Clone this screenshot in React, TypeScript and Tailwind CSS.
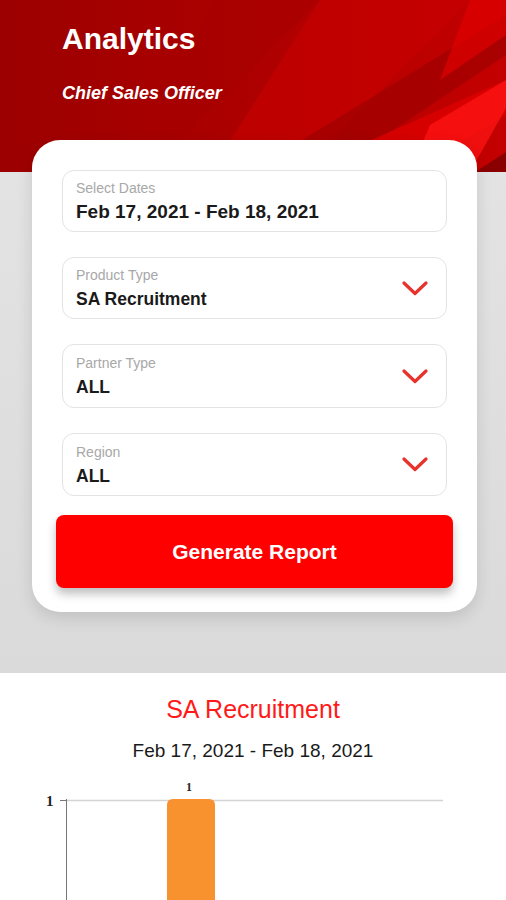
const font = { fontFamily: '"Liberation Sans", Arial, sans-serif' }

function HeaderArt() {
    return (
        <svg className="absolute inset-0 h-full w-full" viewBox="0 0 506 172" preserveAspectRatio="none">
            <defs>
                <linearGradient id="hdr" x1="0" y1="0" x2="1" y2="0">
                    <stop offset="0" stopColor="#9c0000" />
                    <stop offset="0.5" stopColor="#ad0000" />
                    <stop offset="1" stopColor="#c40000" />
                </linearGradient>
            </defs>
            <rect width="506" height="172" fill="url(#hdr)" />
            <polygon points="215,0 320,0 150,172 115,172" fill="#a50000" opacity="0.5" />
            <polygon points="320,0 470,0 300,172 210,172" fill="#c80000" opacity="0.6" />
            <polygon points="250,172 506,15 506,55 330,172" fill="#9e0000" opacity="0.7" />
            <polygon points="300,172 506,80 506,115 410,172" fill="#dd0000" opacity="0.8" />
            <polygon points="470,0 506,0 506,35 440,80" fill="#e00000" opacity="0.7" />
            <polygon points="430,125 506,80 506,108 470,172 410,172" fill="#ff1414" opacity="0.75" />
            <polygon points="475,172 506,152 506,172" fill="#8a0000" />
        </svg>
    )
}

function Chevron() {
    return (
        <svg width="26" height="15" viewBox="0 0 26 15" className="shrink-0">
            <polyline points="2,2 13,12.5 24,2" fill="none" stroke="#e8322b" strokeWidth="3.2" strokeLinecap="round" strokeLinejoin="round" />
        </svg>
    )
}

function Field({ label, value, select, big, h }: { label: string; value: string; select?: boolean; big?: boolean; h: string }) {
    return (
        <div className={`flex ${h} items-center justify-between rounded-[12px] border border-[#e3e3e3] bg-white pl-[13px] pr-[18px]`}>
            <div className="flex flex-col pt-[1px]">
                <span className="text-[14px] leading-[18px] text-[#a8a8a8]">{label}</span>
                <span
                    className={`mt-[3px] leading-[24px] font-bold text-[#1a1a1a] ${big ? "text-[19px]" : "text-[17.5px]"}`}
                >
                    {value}
                </span>
            </div>
            {select && <Chevron />}
        </div>
    )
}

export default function App() {
    return (
        <div className="h-[900px] w-[506px] overflow-hidden bg-white" style={font}>
            <div className="relative h-[172px] overflow-hidden">
                <HeaderArt />
                <div className="relative px-[62px] pt-[20px]">
                    <h1 className="text-[30px] font-bold leading-[38px] text-white">Analytics</h1>
                    <p className="mt-[23px] text-[18px] font-bold italic leading-[24px] text-white">Chief Sales Officer</p>
                </div>
            </div>

            <div className="flex h-[501px] flex-col bg-gradient-to-b from-[#e3e3e3] to-[#dadada] pl-[32px] pr-[29px]">
                <div className="relative -mt-[32px] rounded-[28px] bg-white px-[30px] pb-[24px] pt-[30px] shadow-[0_6px_16px_rgba(0,0,0,0.12)]">
                    <div className="flex flex-col gap-[25px]">
                        <Field label="Select Dates" value="Feb 17, 2021 - Feb 18, 2021" big h="h-[62px]" />
                        <Field label="Product Type" value="SA Recruitment" select h="h-[62px]" />
                        <Field label="Partner Type" value="ALL" select h="h-[64px]" />
                        <Field label="Region" value="ALL" select h="h-[63px]" />
                    </div>
                    <button className="-mx-[6px] mt-[19px] flex h-[73px] w-[calc(100%+12px)] items-center justify-center rounded-[8px] bg-[#ff0000] text-[21px] font-bold text-white shadow-[0_6px_10px_rgba(0,0,0,0.25)]">
                        Generate Report
                    </button>
                </div>
            </div>

            <div className="flex flex-col items-center pt-[20px]">
                <h2 className="text-[25px] leading-[32px] text-[#ff1a1a]">SA Recruitment</h2>
                <p className="mt-[14px] text-[19px] leading-[24px] text-[#1a1a1a]">Feb 17, 2021 - Feb 18, 2021</p>
            </div>

            <div className="relative mt-[6px] h-[200px]">
                <svg className="absolute left-0 top-0" width="506" height="200" viewBox="0 0 506 200">
                    <text x="186" y="22" fontSize="12" fontFamily="Liberation Serif, serif" fontWeight="bold" fill="#222">1</text>
                    <text x="46" y="37" fontSize="15" fontFamily="Liberation Serif, serif" fontWeight="bold" fill="#222">1</text>
                    <line x1="66.5" y1="30" x2="66.5" y2="200" stroke="#777" strokeWidth="1" />
                    <line x1="60" y1="31.5" x2="66" y2="31.5" stroke="#777" strokeWidth="1" />
                    <line x1="67" y1="31.5" x2="443" y2="31.5" stroke="#d4d4d4" strokeWidth="1.5" />
                    <path d="M167 200 V36 Q167 30 173 30 H209 Q215 30 215 36 V200 Z" fill="#f7922f" />
                </svg>
            </div>
        </div>
    )
}
